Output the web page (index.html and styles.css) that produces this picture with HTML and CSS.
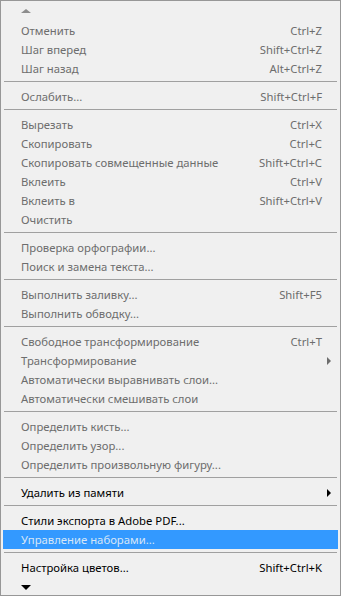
FILE: index.html
```html
<!DOCTYPE html>
<html lang="ru">
<head>
    <meta charset="UTF-8">
    <meta name="viewport" content="width=device-width, initial-scale=1.0">
    <title>Редактирование</title>
    <link rel="stylesheet" href="styles.css">
</head>
<body>
    <div class="menu">
        <div class="scroll scroll-up"><span class="tri-up"></span></div>

        <div class="item off"><span class="label">Отменить</span><span class="key">Ctrl+Z</span></div>
        <div class="item off"><span class="label">Шаг вперед</span><span class="key">Shift+Ctrl+Z</span></div>
        <div class="item off"><span class="label">Шаг назад</span><span class="key">Alt+Ctrl+Z</span></div>
        <div class="sep"></div>

        <div class="item off"><span class="label">Ослабить...</span><span class="key">Shift+Ctrl+F</span></div>
        <div class="sep"></div>

        <div class="item off"><span class="label">Вырезать</span><span class="key">Ctrl+X</span></div>
        <div class="item off"><span class="label">Скопировать</span><span class="key">Ctrl+C</span></div>
        <div class="item off"><span class="label">Скопировать совмещенные данные</span><span class="key">Shift+Ctrl+C</span></div>
        <div class="item off"><span class="label">Вклеить</span><span class="key">Ctrl+V</span></div>
        <div class="item off"><span class="label">Вклеить в</span><span class="key">Shift+Ctrl+V</span></div>
        <div class="item off"><span class="label">Очистить</span></div>
        <div class="sep"></div>

        <div class="item off"><span class="label">Проверка орфографии...</span></div>
        <div class="item off"><span class="label">Поиск и замена текста...</span></div>
        <div class="sep"></div>

        <div class="item off"><span class="label">Выполнить заливку...</span><span class="key">Shift+F5</span></div>
        <div class="item off"><span class="label">Выполнить обводку...</span></div>
        <div class="sep"></div>

        <div class="item off"><span class="label">Свободное трансформирование</span><span class="key">Ctrl+T</span></div>
        <div class="item off sub"><span class="label">Трансформирование</span></div>
        <div class="item off"><span class="label">Автоматически выравнивать слои...</span></div>
        <div class="item off"><span class="label">Автоматически смешивать слои</span></div>
        <div class="sep"></div>

        <div class="item off"><span class="label">Определить кисть...</span></div>
        <div class="item off"><span class="label">Определить узор...</span></div>
        <div class="item off"><span class="label">Определить произвольную фигуру...</span></div>
        <div class="sep"></div>

        <div class="item sub"><span class="label">Удалить из памяти</span></div>
        <div class="sep"></div>

        <div class="item"><span class="label">Стили экспорта в Adobe PDF...</span></div>
        <div class="item hover"><span class="label">Управление наборами...</span></div>
        <div class="sep"></div>

        <div class="item"><span class="label">Настройка цветов...</span><span class="key">Shift+Ctrl+K</span></div>
        <div class="scroll scroll-down"><span class="tri-down"></span></div>
    </div>
</body>
</html>
```

FILE: styles.css
```css
body {
    margin: 0;
    padding: 0;
    background-color: #f0f0f0;
    font-family: "Noto Sans", "Open Sans", sans-serif;
    font-size: 11.3px;
}

.menu {
    box-sizing: border-box;
    width: 341px;
    height: 596px;
    padding: 0 2px;
    border: 1px solid #979797;
    background-color: #f0f0f0;
    overflow: hidden;
}

.scroll {
    display: flex;
    align-items: center;
    padding-left: 18px;
}

.scroll-up {
    height: 20px;
}

.scroll-down {
    height: 18px;
}

.tri-up {
    width: 0;
    height: 0;
    border-left: 5px solid transparent;
    border-right: 5px solid transparent;
    border-bottom: 4px solid #8d8d8d;
    margin-bottom: 1px;
}

.tri-down {
    width: 0;
    height: 0;
    border-left: 5px solid transparent;
    border-right: 5px solid transparent;
    border-top: 5px solid #000;
    margin-top: 2px;
}

.item {
    position: relative;
    display: flex;
    align-items: center;
    height: 19px;
    padding: 0 16px 0 18px;
    color: #000;
    white-space: nowrap;
}

.item .label {
    flex-grow: 1;
}

.item.off {
    color: #6d6d6d;
}

.item.hover {
    background-color: #3399ff;
    color: #d6e6f7;
}

/* submenu triangle */
.item.sub::after {
    content: "";
    position: absolute;
    right: 7px;
    top: 6px;
    border-top: 4px solid transparent;
    border-bottom: 4px solid transparent;
    border-left: 4px solid #000;
}

.item.off.sub::after {
    border-left-color: #6d6d6d;
}

.sep {
    height: 1px;
    margin: 3px 1px 5px 1px;
    background-color: #a0a0a0;
}
```
